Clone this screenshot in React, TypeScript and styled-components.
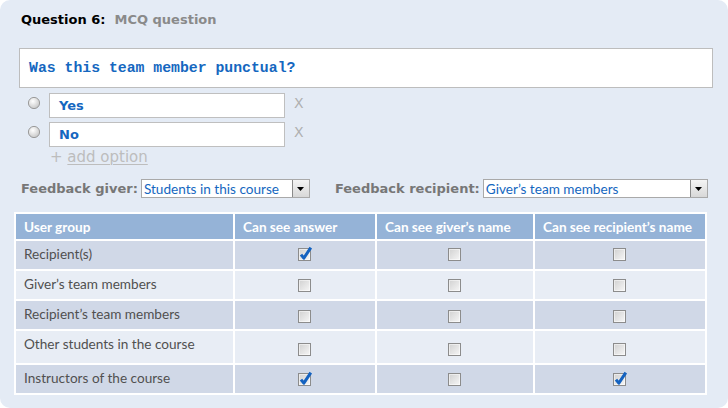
import styled, { createGlobalStyle } from 'styled-components';

const GlobalStyle = createGlobalStyle`
  body {
    margin: 0;
    background: #ffffff;
  }
`;

interface VisibilityRow {
  group: string;
  answer: boolean;
  giver: boolean;
  recipient: boolean;
  height: number;
  boxTop: number;
}

const ROWS: VisibilityRow[] = [
  { group: 'Recipient(s)', answer: true, giver: false, recipient: false, height: 28, boxTop: 8 },
  { group: 'Giver’s team members', answer: false, giver: false, recipient: false, height: 28, boxTop: 9 },
  { group: 'Recipient’s team members', answer: false, giver: false, recipient: false, height: 28, boxTop: 10 },
  { group: 'Other students in the course', answer: false, giver: false, recipient: false, height: 32, boxTop: 13 },
  { group: 'Instructors of the course', answer: true, giver: false, recipient: true, height: 28, boxTop: 9 },
];

const CheckBox = ({ checked }: { checked: boolean }) => (
  <svg width="16" height="16" viewBox="0 0 16 16">
    <defs>
      <linearGradient id="cbFill" x1="0" y1="0" x2="1" y2="1">
        <stop offset="0" stopColor="#cfcfcf" />
        <stop offset="1" stopColor="#f8f8f8" />
      </linearGradient>
    </defs>
    <rect x="1.5" y="2.5" width="12" height="12" fill="url(#cbFill)" stroke="#8c8c8c" />
    <rect x="2.5" y="3.5" width="10" height="10" fill="none" stroke="#ffffff" strokeOpacity="0.5" />
    {checked && (
      <path d="M4 8.6 L6.8 12.2 L13.8 1.6" fill="none" stroke="#1462c0" strokeWidth="3" strokeLinejoin="round" />
    )}
  </svg>
);

const Radio = () => (
  <svg width="14" height="14" viewBox="0 0 14 14">
    <defs>
      <radialGradient id="rdFill" cx="0.4" cy="0.35" r="0.7">
        <stop offset="0" stopColor="#ffffff" />
        <stop offset="1" stopColor="#c4c4c4" />
      </radialGradient>
    </defs>
    <circle cx="7" cy="7" r="5.6" fill="url(#rdFill)" stroke="#9a9a9a" />
  </svg>
);

const DropArrow = () => (
  <ArrowButton>
    <svg width="7" height="4" viewBox="0 0 7 4">
      <path d="M0 0 H7 L3.5 4 Z" fill="#000" />
    </svg>
  </ArrowButton>
);

const App = () => {
  return (
    <>
      <GlobalStyle />
      <Panel>
        <Title>
          Question 6:<Kind>MCQ question</Kind>
        </Title>
        <QuestionBox>Was this team member punctual?</QuestionBox>
        <Options>
          {['Yes', 'No'].map((option, i) => (
            <OptionRow key={option} $shift={i}>
              <Radio />
              <OptionInput>{option}</OptionInput>
              <Remove>X</Remove>
            </OptionRow>
          ))}
          <AddOption>
            + <u>add option</u>
          </AddOption>
        </Options>
        <FeedbackRow>
          <Label>Feedback giver:</Label>
          <Select $width={169}>
            <SelectText>Students in this course</SelectText>
            <DropArrow />
          </Select>
          <Label $gap={25}>Feedback recipient:</Label>
          <Select $width={225}>
            <SelectText>Giver’s team members</SelectText>
            <DropArrow />
          </Select>
        </FeedbackRow>
        <Table>
          <colgroup>
            <col style={{ width: 217 }} />
            <col style={{ width: 140 }} />
            <col style={{ width: 156 }} />
            <col style={{ width: 170 }} />
          </colgroup>
          <thead>
            <tr>
              <HeadCell>User group</HeadCell>
              <HeadCell>Can see answer</HeadCell>
              <HeadCell>Can see giver’s name</HeadCell>
              <HeadCell>Can see recipient’s name</HeadCell>
            </tr>
          </thead>
          <tbody>
            {ROWS.map((row, i) => (
              <BodyRow key={row.group} $odd={i % 2 === 0} $height={row.height}>
                <GroupCell>{row.group}</GroupCell>
                {[row.answer, row.giver, row.recipient].map((checked, j) => (
                  <BoxCell key={j} $top={row.boxTop}>
                    <CheckBox checked={checked} />
                  </BoxCell>
                ))}
              </BodyRow>
            ))}
          </tbody>
        </Table>
      </Panel>
    </>
  );
};

export default App;

const Panel = styled.div`
  box-sizing: border-box;
  width: 728px;
  height: 408px;
  padding: 12px 15px 0 15px;
  background: #e4ebf5;
  border-radius: 10px;
  overflow: hidden;
`;

const Title = styled.div`
  margin-left: 6px;
  font: bold 13px 'DejaVu Sans', Verdana, sans-serif;
  color: #000;
  line-height: 16px;
`;

const Kind = styled.span`
  margin-left: 9px;
  color: #8a8a8a;
`;

const QuestionBox = styled.div`
  box-sizing: border-box;
  margin: 20px 0 0 4px;
  height: 40px;
  padding: 0 9px;
  display: flex;
  align-items: center;
  background: #fff;
  border: 1px solid #bdbdbd;
  font: bold 14.8px 'Liberation Mono', 'Courier New', monospace;
  color: #1567c0;
`;

const Options = styled.div`
  display: flex;
  flex-direction: column;
  margin-top: 5px;
  padding-left: 12px;
`;

const OptionRow = styled.div<{ $shift: number }>`
  display: flex;
  align-items: center;
  gap: 8px;
  height: 24px;
  margin-bottom: 5px;

  svg {
    margin-top: ${({ $shift }) => -4 - $shift}px;
  }
`;

const OptionInput = styled.div`
  box-sizing: border-box;
  width: 236px;
  height: 25px;
  padding: 0 9px;
  display: flex;
  align-items: center;
  background: #fff;
  border: 1px solid #bfbfbf;
  font: bold 13px 'DejaVu Sans', Verdana, sans-serif;
  color: #1567c0;
`;

const Remove = styled.span`
  margin: -4px 0 0 1px;
  font: 14px 'DejaVu Sans', Verdana, sans-serif;
  color: #b0b0b0;
`;

const AddOption = styled.div`
  margin: -3px 0 0 23px;
  font: 15px 'DejaVu Sans', Verdana, sans-serif;
  color: #bdbdbd;
  line-height: 18px;

  u {
    text-decoration-thickness: 1px;
    text-underline-offset: 2px;
  }
`;

const FeedbackRow = styled.div`
  display: flex;
  align-items: center;
  margin: 13px 0 0 6px;
  height: 19px;
`;

const Label = styled.span<{ $gap?: number }>`
  margin-left: ${({ $gap }) => $gap ?? 0}px;
  margin-right: 3px;
  font: bold 13px 'DejaVu Sans', Verdana, sans-serif;
  color: #777;
  white-space: nowrap;
`;

const Select = styled.div<{ $width: number }>`
  box-sizing: border-box;
  width: ${({ $width }) => $width}px;
  height: 19px;
  display: flex;
  align-items: center;
  justify-content: space-between;
  background: #fff;
  border: 1px solid #a9a9a9;
  padding: 0 0 0 2px;
`;

const SelectText = styled.span`
  font: 13.6px Lato, 'Open Sans', sans-serif;
  color: #1567c0;
  white-space: nowrap;
`;

const ArrowButton = styled.span`
  box-sizing: border-box;
  width: 17px;
  height: 17px;
  display: flex;
  align-items: center;
  justify-content: center;
  background: linear-gradient(#f4f4f4, #d8d8d8);
  border-left: 1px solid #8a8a8a;
`;

const Table = styled.table`
  margin-top: 14px;
  margin-left: -1px;
  width: 693px;
  border-collapse: separate;
  border-spacing: 2px;
  background: #ffffff;
  table-layout: fixed;
  font-family: Lato, 'Open Sans', sans-serif;
  font-size: 13.6px;
`;

const HeadCell = styled.th`
  height: 25px;
  padding: 0 8px;
  background: #95b3d7;
  color: #fff;
  font-weight: bold;
  text-align: left;
  white-space: nowrap;
`;

const BodyRow = styled.tr<{ $odd: boolean; $height: number }>`
  height: ${({ $height }) => $height}px;
  background: ${({ $odd }) => ($odd ? '#d0d8e7' : '#e8edf5')};
`;

const GroupCell = styled.td`
  padding: 5px 8px 0;
  vertical-align: top;
  color: #505050;
  white-space: nowrap;
  line-height: 17px;
`;

const BoxCell = styled.td<{ $top: number }>`
  padding: ${({ $top }) => $top - 3}px 0 0;
  vertical-align: top;
  text-align: center;
  line-height: 0;
`;
